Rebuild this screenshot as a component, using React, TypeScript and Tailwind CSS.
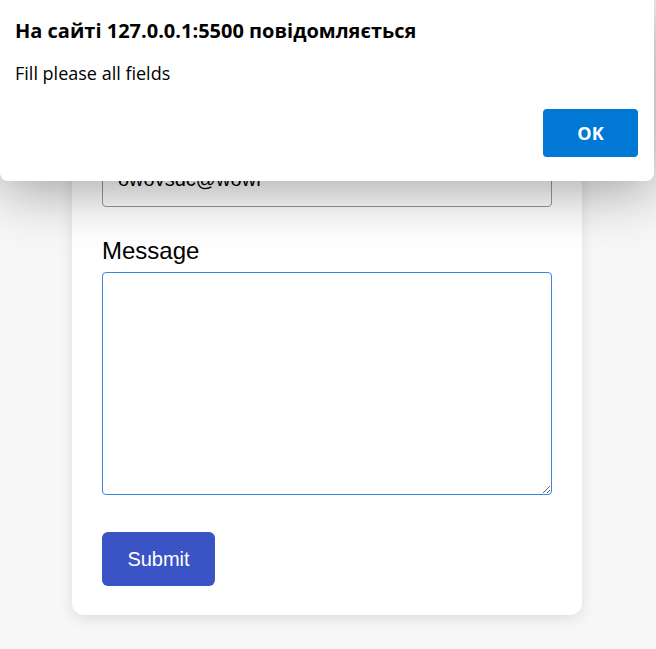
export default function App() {
  return (
    <div className="relative min-h-[649px] overflow-hidden bg-[#f7f7f7] font-['Liberation_Sans',Arial,sans-serif]">
      <form className="ml-[72px] w-[510px] rounded-b-xl bg-white px-[30px] pt-[152px] pb-[29px] shadow-[0_4px_14px_rgba(0,0,0,0.1)]">
        <input
          type="email"
          defaultValue="owovsdc@wowr"
          className="block w-full rounded-[4px] border border-[#9a9a9a] bg-white px-[15px] py-[15px] text-[20px] leading-[23px] text-black outline-none"
        />
        <label className="mt-[30px] mb-[7px] block text-[24px] leading-[28px] text-black">Message</label>
        <textarea className="block h-[223px] w-full rounded-[4px] border border-[#3a86dc] bg-white px-[15px] py-[10px] text-[20px] outline-none" />
        <button
          type="button"
          className="mt-[37px] flex h-[54px] w-[113px] items-center justify-center rounded-[6px] bg-[#3a53c5] text-[20px] text-white"
        >
          Submit
        </button>
      </form>

      {/* browser alert() dialog */}
      <div className="absolute top-0 left-0 h-[181px] w-[654px] rounded-b-lg bg-white px-[15px] pt-[17px] font-['Open_Sans','Noto_Sans',sans-serif] shadow-[0_6px_60px_rgba(0,0,0,0.4)]">
        <h2 className="text-[20px] leading-[28px] font-bold text-black">На сайті 127.0.0.1:5500 повідомляється</h2>
        <p className="mt-[16px] text-[18px] leading-[24px] text-black">Fill please all fields</p>
        <div className="mt-[24px] flex justify-end pr-[1px]">
          <button
            type="button"
            className="flex h-[48px] w-[95px] items-center justify-center rounded-[4px] bg-[#0078d4] text-[18px] font-bold text-white"
          >
            OK
          </button>
        </div>
      </div>
    </div>
  );
}
